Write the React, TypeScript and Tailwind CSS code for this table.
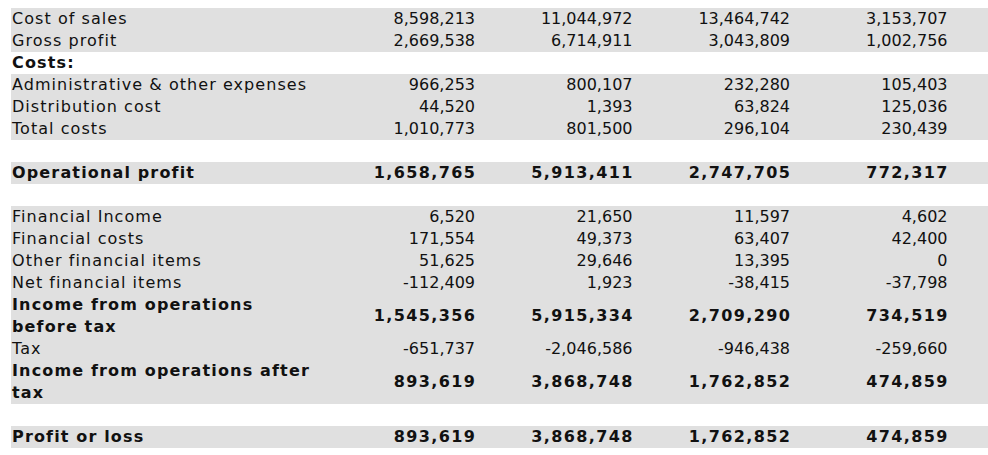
type Row = {
  label?: string[];
  values?: string[];
  bold?: boolean;
  shaded?: boolean;
};

const rows: Row[] = [
  { label: ["Cost of sales"], values: ["8,598,213", "11,044,972", "13,464,742", "3,153,707"], shaded: true },
  { label: ["Gross profit"], values: ["2,669,538", "6,714,911", "3,043,809", "1,002,756"], shaded: true },
  { label: ["Costs:"], bold: true },
  { label: ["Administrative & other expenses"], values: ["966,253", "800,107", "232,280", "105,403"], shaded: true },
  { label: ["Distribution cost"], values: ["44,520", "1,393", "63,824", "125,036"], shaded: true },
  { label: ["Total costs"], values: ["1,010,773", "801,500", "296,104", "230,439"], shaded: true },
  {},
  { label: ["Operational profit"], values: ["1,658,765", "5,913,411", "2,747,705", "772,317"], bold: true, shaded: true },
  {},
  { label: ["Financial Income"], values: ["6,520", "21,650", "11,597", "4,602"], shaded: true },
  { label: ["Financial costs"], values: ["171,554", "49,373", "63,407", "42,400"], shaded: true },
  { label: ["Other financial items"], values: ["51,625", "29,646", "13,395", "0"], shaded: true },
  { label: ["Net financial items"], values: ["-112,409", "1,923", "-38,415", "-37,798"], shaded: true },
  { label: ["Income from operations", "before tax"], values: ["1,545,356", "5,915,334", "2,709,290", "734,519"], bold: true, shaded: true },
  { label: ["Tax"], values: ["-651,737", "-2,046,586", "-946,438", "-259,660"], shaded: true },
  { label: ["Income from operations after", "tax"], values: ["893,619", "3,868,748", "1,762,852", "474,859"], bold: true, shaded: true },
  {},
  { label: ["Profit or loss"], values: ["893,619", "3,868,748", "1,762,852", "474,859"], bold: true, shaded: true },
];

export default function App() {
  return (
    <div
      className="min-h-screen w-full overflow-hidden bg-white pt-[8px] pl-[11px] text-[16px] leading-[22px] text-[#111]"
      style={{ fontFamily: '"DejaVu Sans", Verdana, sans-serif' }}
    >
      {rows.map((row, i) => (
        <div
          key={i}
          className={
            "grid min-h-[22px] grid-cols-[306.5px_157.5px_157.5px_157.5px_157.5px_1fr] items-center " +
            (row.shaded ? "bg-[#e0e0e0] " : "bg-white ") +
            (row.bold ? "font-bold" : "font-normal")
          }
        >
          <div
            className={
              "whitespace-nowrap pl-[1px] " +
              (row.bold ? "tracking-[1.15px]" : "tracking-[1.05px]")
            }
          >
            {row.label?.map((line, j) => (
              <div key={j}>{line}</div>
            ))}
          </div>
          {[0, 1, 2, 3].map((c) => (
            <div
              key={c}
              className={
                "whitespace-nowrap text-right " +
                (row.bold ? "mr-[-1.4px] tracking-[1.4px]" : "")
              }
            >
              {row.values?.[c] ?? ""}
            </div>
          ))}
          <div />
        </div>
      ))}
    </div>
  );
}
